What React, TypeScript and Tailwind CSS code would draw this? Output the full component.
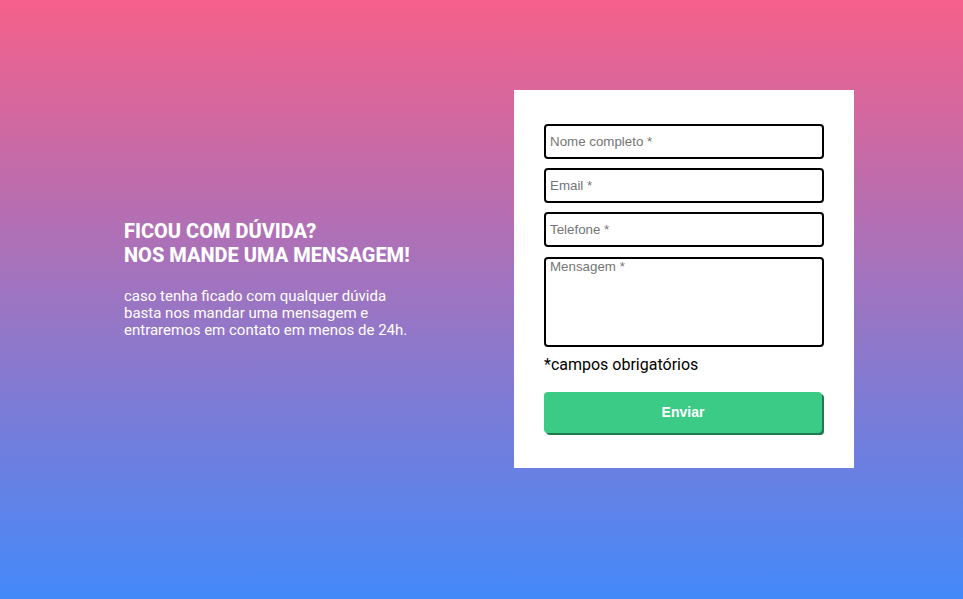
export default function App() {
  const fields = ["Nome completo *", "Email *", "Telefone *"]

  return (
    <section className="h-[599px] w-full bg-[linear-gradient(180deg,#f5608a,#4389fa)] flex items-center pl-[124px] pb-[42px]">
      {/* texto */}
      <div className="w-[390px] text-white font-['Roboto',sans-serif]">
        <h2 className="text-[20px] leading-[24px] font-extrabold uppercase">
          Ficou com dúvida?
          <br />
          Nos mande uma mensagem!
        </h2>
        <p className="mt-[21px] text-[15px] leading-[17px] w-[300px]">
          caso tenha ficado com qualquer dúvida basta nos mandar uma mensagem e entraremos em contato em menos de 24h.
        </p>
      </div>

      {/* formulário */}
      <form className="w-[340px] bg-white px-[30px] pt-[34px] pb-[35px] flex flex-col">
        {fields.map((f) => (
          <input
            key={f}
            placeholder={f}
            className="h-[35px] mb-[9px] w-full border-2 border-black rounded-[4px] px-[4px] text-[13.33px] font-['Liberation_Sans',Arial,sans-serif] placeholder:text-[#757575] outline-none"
          />
        ))}
        <textarea
          placeholder="Mensagem *"
          className="h-[90px] mt-[1px] w-full border-2 border-black rounded-[4px] px-[4px] py-0 text-[13.33px] leading-[15px] font-['Liberation_Sans',Arial,sans-serif] placeholder:text-[#757575] outline-none resize-none"
        />
        <p className="mt-[8px] text-[16px] leading-[20px] text-black font-['Roboto',sans-serif]">*campos obrigatórios</p>
        <button
          type="button"
          className="mt-[17px] h-[41px] w-[278px] bg-[#3ccb87] rounded-[4px] shadow-[2px_2px_0_#1f7a50] text-white text-[14px] font-bold font-['Liberation_Sans',Arial,sans-serif]"
        >
          Enviar
        </button>
      </form>
    </section>
  )
}
